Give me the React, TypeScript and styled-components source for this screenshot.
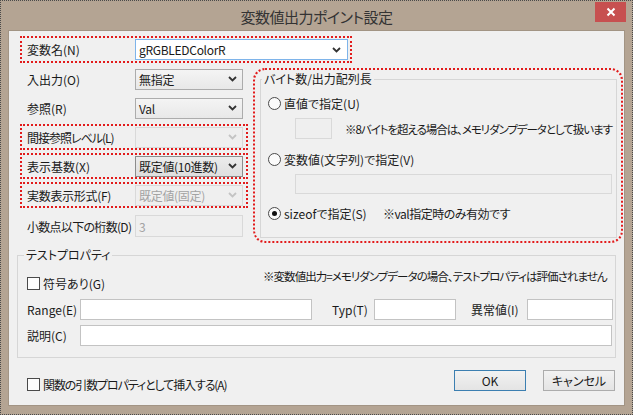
import styled, { createGlobalStyle } from "styled-components"

const GlobalStyle = createGlobalStyle`
  html, body {
    margin: 0;
    padding: 0;
    background: #ffffff;
  }
  body {
    font-family: "Noto Sans CJK JP", "Liberation Sans", sans-serif;
    font-size: 12px;
    font-feature-settings: "palt";
    color: #1a1a1a;
  }
  * { box-sizing: border-box; }
`

const Chevron = ({ color = "#333" }: { color?: string }) => (
    <svg width="9" height="6" viewBox="0 0 9 6">
        <path d="M1 1 L4.5 4.5 L8 1" fill="none" stroke={color} strokeWidth="1.8" />
    </svg>
)

const App = () => {
    return (
        <>
            <GlobalStyle />
            <Window>
                <TitleBar>
                    <span />
                    <Title>変数値出力ポイント設定</Title>
                    <CloseButton>
                        <svg width="10" height="10" viewBox="0 0 10 10">
                            <path d="M1.5 1.5 L8.5 8.5 M8.5 1.5 L1.5 8.5" stroke="#fff" strokeWidth="2" />
                        </svg>
                    </CloseButton>
                </TitleBar>

                <Client>
                    <NameRow>
                        <Label>変数名(N)</Label>
                        <Combo $editable>
                            <Value>gRGBLEDColorR</Value>
                            <Chevron />
                        </Combo>
                    </NameRow>

                    <Upper>
                        <LeftCol>
                            <Row>
                                <Label>入出力(O)</Label>
                                <Combo><Value>無指定</Value><Chevron /></Combo>
                            </Row>
                            <Row>
                                <Label>参照(R)</Label>
                                <Combo><Value>Val</Value><Chevron /></Combo>
                            </Row>
                            <Row $mark>
                                <Label $ls={-1}>間接参照レベル(L)</Label>
                                <Combo $disabled><Value /><Chevron color="#c4c4c4" /></Combo>
                            </Row>
                            <Row $mark>
                                <Label>表示基数(X)</Label>
                                <Combo $focus><Value>既定値(10進数)</Value><Chevron /></Combo>
                            </Row>
                            <Row $mark>
                                <Label $ls={-0.3}>実数表示形式(F)</Label>
                                <Combo $disabled><Value>既定値(固定)</Value><Chevron color="#c4c4c4" /></Combo>
                            </Row>
                            <Row $top={2}>
                                <Label $ls={-0.7}>小数点以下の桁数(D)</Label>
                                <TextBox $disabled $h={22}>3</TextBox>
                            </Row>
                        </LeftCol>

                        <RightBox>
                            <Group $m="2px 4px 3px 5px" $grow>
                                <Legend $ml={1}>バイト数/出力配列長</Legend>
                                <GroupBody $p="0 4px 0 7px">
                                    <Option $top={10}>
                                        <Radio />
                                        <span>直値で指定(U)</span>
                                    </Option>
                                    <SubRow>
                                        <TextBox $disabled $w={37} $h={21} />
                                        <Note $ml={13} $ls={-1.05} $small>※8バイトを超える場合は、メモリダンプデータとして扱います</Note>
                                    </SubRow>
                                    <Option $top={13}>
                                        <Radio />
                                        <span>変数値(文字列)で指定(V)</span>
                                    </Option>
                                    <SubRow>
                                        <TextBox $disabled $w={317} $h={20} />
                                    </SubRow>
                                    <Option $top={12}>
                                        <OptionItem>
                                            <Radio $checked />
                                            <span>sizeofで指定(S)</span>
                                        </OptionItem>
                                        <Note $ls={-0.5}>※val指定時のみ有効です</Note>
                                    </Option>
                                </GroupBody>
                            </Group>
                        </RightBox>
                    </Upper>

                    <Group $m="5px 7px 0 0">
                        <Legend $ml={6}>テストプロパティ</Legend>
                        <GroupBody $p="0 3px 11px 9px">
                            <CheckRow>
                                <CheckItem>
                                    <CheckBox />
                                    <span>符号あり(G)</span>
                                </CheckItem>
                                <Note $ls={-0.95} $small>※変数値出力=メモリダンプデータの場合、テストプロパティは評価されません</Note>
                            </CheckRow>
                            <FieldRow $top={9}>
                                <FieldLabel $w={53}>Range(E)</FieldLabel>
                                <TextBox $w={232} $h={21} />
                                <FieldLabel $w={42} $ml={20}>Typ(T)</FieldLabel>
                                <TextBox $w={82} $h={21} />
                                <FieldLabel $w={56} $ml={15}>異常値(I)</FieldLabel>
                                <TextBox $w={86} $h={21} />
                            </FieldRow>
                            <FieldRow $top={5}>
                                <FieldLabel $w={53}>説明(C)</FieldLabel>
                                <TextBox $h={21} $grow />
                            </FieldRow>
                        </GroupBody>
                    </Group>

                    <Footer>
                        <CheckItem>
                            <CheckBox />
                            <Note $ls={-1.1}>関数の引数プロパティとして挿入する(A)</Note>
                        </CheckItem>
                        <Space />
                        <Button $default>OK</Button>
                        <Button>キャンセル</Button>
                    </Footer>
                </Client>
            </Window>
        </>
    )
}

export default App

const Window = styled.div`
width: 633px;
height: 415px;
border: 1px dotted #4a4a4a;
background: #b4a493;
display: flex;
flex-direction: column;
`

const TitleBar = styled.div`
height: 29px;
flex-shrink: 0;
display: grid;
grid-template-columns: 1fr auto 1fr;
align-items: center;
`

const Title = styled.div`
font-size: 15px;
letter-spacing: -0.5px;
color: #333;
padding-top: 1px;
`

const CloseButton = styled.div`
justify-self: end;
align-self: start;
margin: 1px 6px 0 0;
width: 31px;
height: 20px;
background: #c75050;
display: flex;
align-items: center;
justify-content: center;
`

const Client = styled.div`
margin: 0 7px 8px 7px;
flex: 1;
background: #f0f0f0;
border: 1px solid #a29484;
padding: 5px 1px 0 8px;
display: flex;
flex-direction: column;
`

const NameRow = styled.div`
margin-left: 3px;
width: 332px;
height: 27px;
border: 2px dotted #e21b1b;
padding: 0 2px 0 5px;
display: grid;
grid-template-columns: 108px 213px;
align-items: center;
`

const Upper = styled.div`
margin: 3px 0 0 3px;
display: flex;
gap: 5px;
align-items: flex-start;
`

const LeftCol = styled.div`
width: 228px;
flex-shrink: 0;
display: flex;
flex-direction: column;
gap: 3px;
`

const Row = styled.div<{ $mark?: boolean; $top?: number }>`
height: 26px;
margin-top: ${p => p.$top || 0}px;
border: 2px dotted ${p => (p.$mark ? "#e21b1b" : "transparent")};
padding: 0 3px 0 5px;
display: grid;
grid-template-columns: 108px 1fr;
align-items: center;
`

const Label = styled.div<{ $ls?: number }>`
white-space: nowrap;
letter-spacing: ${p => p.$ls || 0}px;
`

const Combo = styled.div<{ $editable?: boolean; $disabled?: boolean; $focus?: boolean }>`
height: 21px;
display: flex;
align-items: center;
padding: 0 ${p => (p.$editable ? "6px" : "5px")} 0 3px;
border: 1px solid ${p => (p.$editable ? "#7eb4ea" : p.$disabled ? "#d9d9d9" : p.$focus ? "#8c8c8c" : "#acacac")};
background: ${p =>
        p.$editable ? "#fff" : p.$disabled ? "#efefef" : p.$focus ? "linear-gradient(#ececec, #dfdfdf)" : "linear-gradient(#f4f4f4, #e8e8e8)"};
color: ${p => (p.$disabled ? "#a3a3a3" : "#1a1a1a")};
`

const Value = styled.span`
flex: 1;
white-space: nowrap;
letter-spacing: -0.3px;
`

const RightBox = styled.div`
margin-top: 2px;
width: 370px;
height: 175px;
flex-shrink: 0;
border: 2px dotted #e21b1b;
border-radius: 12px;
display: flex;
`

const Group = styled.fieldset<{ $m: string; $grow?: boolean }>`
flex: ${p => (p.$grow ? 1 : "none")};
margin: ${p => p.$m};
padding: 0;
border: 1px solid #d6d6d6;
min-width: 0;
`

const Legend = styled.legend<{ $ml: number }>`
margin-left: ${p => p.$ml}px;
padding: 0 2px;
line-height: 14px;
color: #1a1a1a;
`

const GroupBody = styled.div<{ $p: string }>`
padding: ${p => p.$p};
display: flex;
flex-direction: column;
`

const Option = styled.div<{ $top: number }>`
margin-top: ${p => p.$top}px;
height: 14px;
display: flex;
align-items: center;
`

const OptionItem = styled.div`
width: 115px;
display: flex;
align-items: center;
`

const Radio = styled.span<{ $checked?: boolean }>`
width: 13px;
height: 13px;
border-radius: 50%;
border: 1px solid #4a4a4a;
background: #fbfbfb;
margin-right: 3px;
display: flex;
align-items: center;
justify-content: center;
flex-shrink: 0;
&::after {
    content: "";
    width: 5px;
    height: 5px;
    border-radius: 50%;
    background: ${p => (p.$checked ? "#111" : "transparent")};
}
`

const SubRow = styled.div`
margin: 8px 0 0 27px;
display: flex;
align-items: center;
`

const TextBox = styled.div<{ $disabled?: boolean; $w?: number; $h: number; $grow?: boolean }>`
width: ${p => (p.$w ? `${p.$w}px` : "auto")};
flex: ${p => (p.$grow ? 1 : "none")};
height: ${p => p.$h}px;
border: 1px solid ${p => (p.$disabled ? "#d9d9d9" : "#c3c3c3")};
background: ${p => (p.$disabled ? "#efefef" : "#fff")};
color: #a3a3a3;
padding: 2px 3px 0;
`

const Note = styled.span<{ $ml?: number; $ls?: number; $small?: boolean }>`
margin-left: ${p => p.$ml || 0}px;
letter-spacing: ${p => p.$ls || 0}px;
font-size: ${p => (p.$small ? "11.5px" : "12px")};
white-space: nowrap;
`

const CheckRow = styled.div`
margin-top: 6px;
height: 22px;
display: grid;
grid-template-columns: 236px 1fr;
`

const CheckItem = styled.div`
align-self: end;
display: flex;
align-items: center;
height: 14px;
`

const CheckBox = styled.span`
width: 13px;
height: 13px;
border: 1px solid #4a4a4a;
background: #fdfdfd;
margin-right: 3px;
flex-shrink: 0;
`

const FieldRow = styled.div<{ $top: number }>`
margin-top: ${p => p.$top}px;
display: flex;
align-items: center;
`

const FieldLabel = styled.span<{ $w: number; $ml?: number }>`
width: ${p => p.$w}px;
margin-left: ${p => p.$ml || 0}px;
white-space: nowrap;
flex-shrink: 0;
`

const Footer = styled.div`
margin-top: 13px;
padding: 0 8px 0 10px;
display: flex;
align-items: flex-start;
gap: 17px;
`

const Space = styled.div`
flex: 1
`

const Button = styled.div<{ $default?: boolean }>`
width: 72px;
height: 21px;
margin-top: -1px;
border: 1px solid ${p => (p.$default ? "#3c7fb1" : "#acacac")};
background: linear-gradient(#f2f2f2, #e4e4e4);
display: flex;
align-items: center;
justify-content: center;
`
